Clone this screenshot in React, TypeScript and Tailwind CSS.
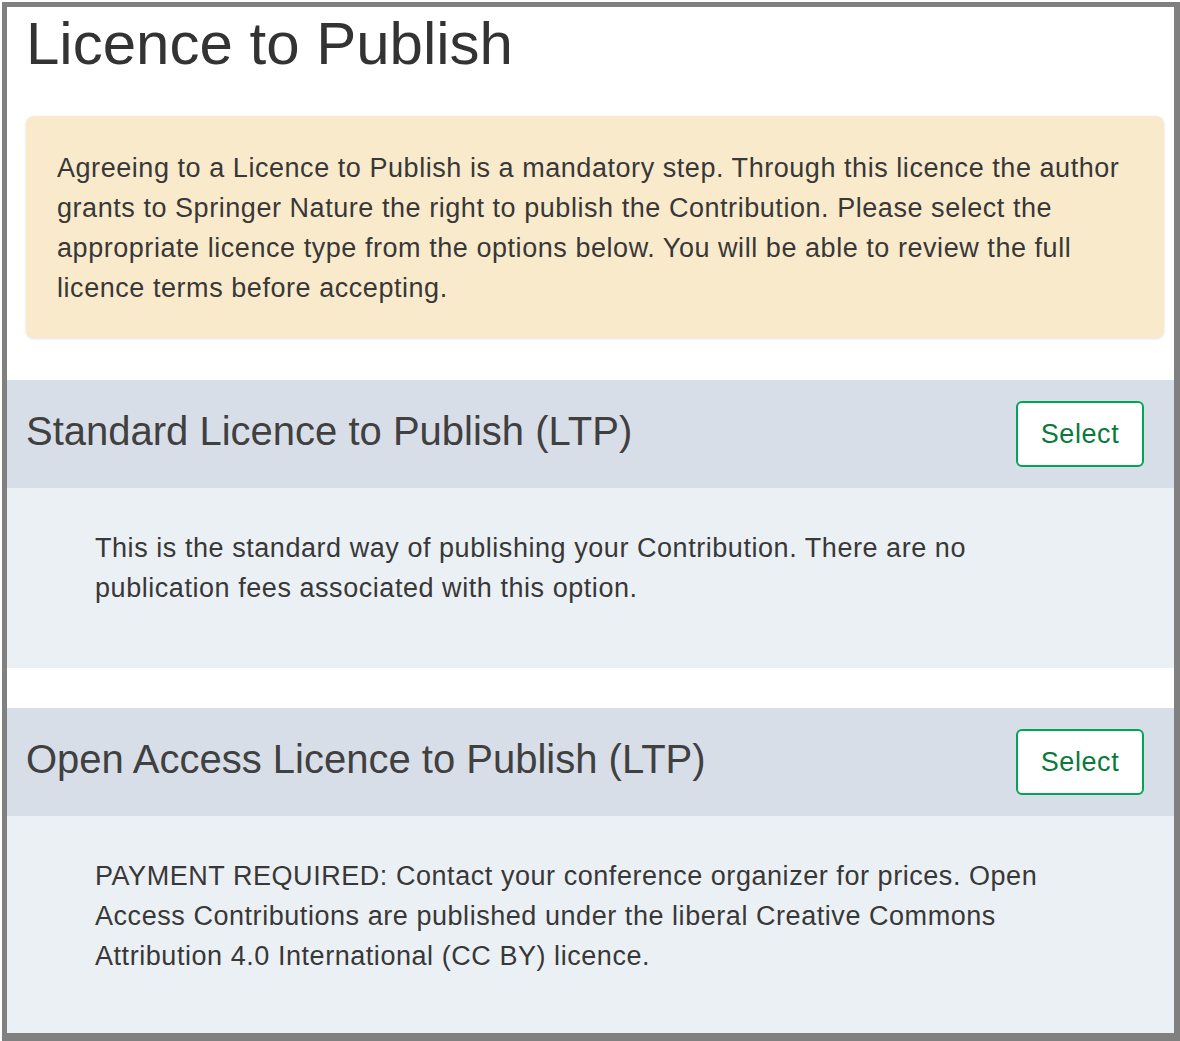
import React from "react";

function SelectButton() {
  return (
    <button
      type="button"
      className="w-[128px] h-[66px] shrink-0 bg-white border-2 border-[#00a651] rounded-[6px] text-[27px] tracking-[0.6px] text-[#0a7a3c] leading-none"
    >
      Select
    </button>
  );
}

function Header({ title }: { title: string }) {
  return (
    <div className="h-[108px] bg-[#d8dee8] flex items-center justify-between pl-[19px] pr-[30px]">
      <h2 className="text-[40px] leading-none text-[#404040] -mt-[6px]">{title}</h2>
      <SelectButton />
    </div>
  );
}

function Lines({ lines }: { lines: string[] }) {
  return (
    <p className="text-[27px] tracking-[0.55px] leading-[40px] text-[#383838]">
      {lines.map((l, i) => (
        <React.Fragment key={i}>
          {l}
          {i < lines.length - 1 && <br />}
        </React.Fragment>
      ))}
    </p>
  );
}

export default function App() {
  return (
    <div
      className="bg-white w-[1180px] h-[1041px] pl-[2px] pt-[2px]"
      style={{ fontFamily: '"Liberation Sans", Arial, Helvetica, sans-serif' }}
    >
      <div className="w-[1178px] h-[1039px] border-t-[5px] border-l-[5px] border-r-[6px] border-b-[8px] border-[#808080] bg-white flex flex-col overflow-hidden">
        <h1 className="text-[60px] leading-[66px] text-[#333333] pl-[19px] pt-[4px]">
          Licence to Publish
        </h1>
        <div className="mt-[39px] ml-[19px] mr-[10px] bg-[#faeacc] rounded-[8px] shadow-[0_1px_3px_rgba(0,0,0,0.12)] pt-[32px] pb-[30px] px-[31px]">
          <Lines
            lines={[
              "Agreeing to a Licence to Publish is a mandatory step. Through this licence the author",
              "grants to Springer Nature the right to publish the Contribution. Please select the",
              "appropriate licence type from the options below. You will be able to review the full",
              "licence terms before accepting.",
            ]}
          />
        </div>
        <div className="mt-[42px]">
          <Header title="Standard Licence to Publish (LTP)" />
          <div className="bg-[#ebf0f5] pl-[88px] pr-[20px] pt-[40px] pb-[60px]">
            <Lines
              lines={[
                "This is the standard way of publishing your Contribution. There are no",
                "publication fees associated with this option.",
              ]}
            />
          </div>
        </div>
        <div className="mt-[40px] flex-1 flex flex-col">
          <Header title="Open Access Licence to Publish (LTP)" />
          <div className="flex-1 bg-[#ebf0f5] pl-[88px] pr-[20px] pt-[40px]">
            <Lines
              lines={[
                "PAYMENT REQUIRED: Contact your conference organizer for prices. Open",
                "Access Contributions are published under the liberal Creative Commons",
                "Attribution 4.0 International (CC BY) licence.",
              ]}
            />
          </div>
        </div>
      </div>
    </div>
  );
}
